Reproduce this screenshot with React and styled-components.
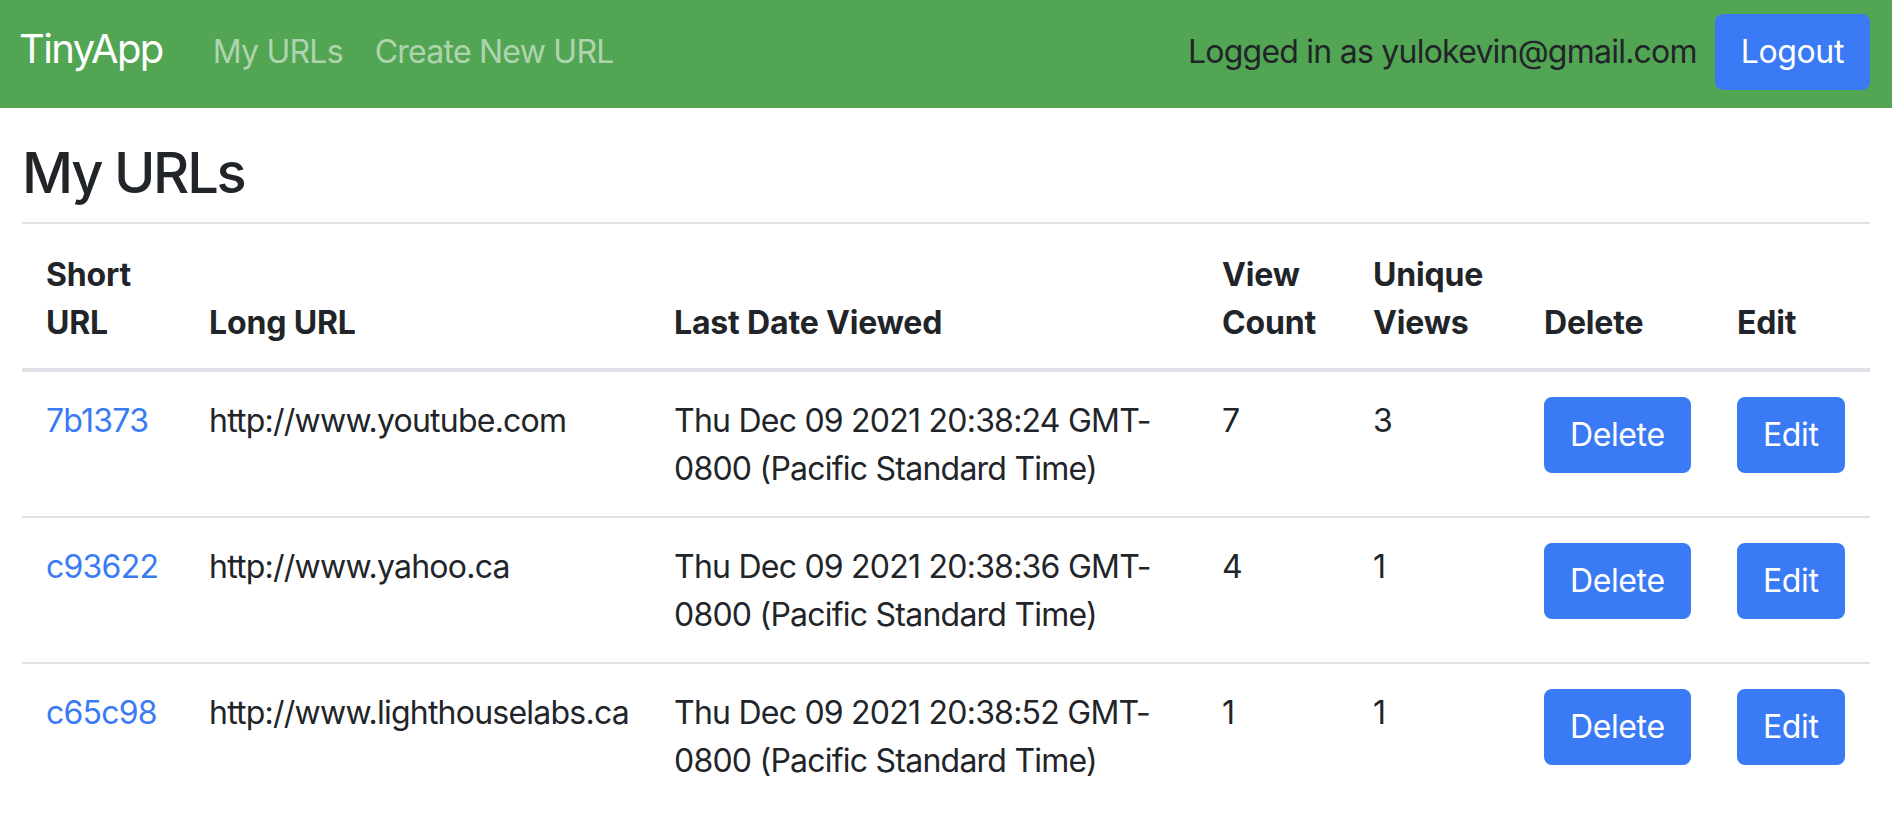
import React from "react";
import styled, { createGlobalStyle } from "styled-components";

const GlobalStyle = createGlobalStyle`
  html, body {
    margin: 0;
    padding: 0;
    background: #ffffff;
  }
  body {
    font-family: Inter, "Noto Sans", "Liberation Sans", sans-serif;
    color: #212529;
    font-size: 32px;
    line-height: 48px;
    letter-spacing: -0.024em;
  }
  * { box-sizing: border-box; }
`;

const Navbar = styled.nav`
  display: flex;
  align-items: center;
  justify-content: space-between;
  height: 108px;
  padding: 0 22px 4px 19px;
  background: #52a552;
`;

const NavLeft = styled.div`
  display: flex;
  align-items: baseline;
`;

const Brand = styled.a`
  font-size: 40px;
  line-height: 40px;
  letter-spacing: -0.04em;
  color: #ffffff;
  text-decoration: none;
  margin-right: 34px;
`;

const NavLink = styled.a`
  font-size: 32px;
  line-height: 48px;
  padding: 0 16px;
  color: rgba(255, 255, 255, 0.55);
  text-decoration: none;
`;

const NavRight = styled.div`
  display: flex;
  align-items: center;
  gap: 18px;
`;

const UserText = styled.span`
  font-size: 32px;
  line-height: 48px;
  color: #212529;
`;

const Button = styled.button`
  display: inline-block;
  font-family: inherit;
  font-size: 32px;
  line-height: 48px;
  letter-spacing: -0.012em;
  padding: 12px 24px;
  color: #ffffff;
  background: #3a7bf5;
  border: 2px solid #3a7bf5;
  border-radius: 8px;
  cursor: pointer;
  vertical-align: top;
`;

const Main = styled.main`
  padding: 0 22px;
`;

const Title = styled.h1`
  font-size: 56px;
  font-weight: 500;
  line-height: 70px;
  letter-spacing: -0.04em;
  margin: 30px 0 14px;
`;

const Table = styled.table`
  width: 100%;
  border-collapse: collapse;
  table-layout: fixed;
`;

const Th = styled.th`
  text-align: left;
  vertical-align: bottom;
  padding: 27px 24px 21px;
  font-weight: 700;
  letter-spacing: -0.005em;
  border-top: 2px solid #dee2e6;
  border-bottom: 4px solid #dee2e6;
`;

const Td = styled.td`
  text-align: left;
  vertical-align: top;
  padding: 25px 24px 23px;
  border-top: 2px solid #dee2e6;
`;

const ShortLink = styled.a`
  color: #3a7bf5;
  text-decoration: none;
`;

const columns = [163, 465, 548, 151, 171, 193, 157];

const rows = [
  { id: "7b1373", url: "http://www.youtube.com", date: "Thu Dec 09 2021 20:38:24 GMT-0800 (Pacific Standard Time)", views: 7, unique: 3 },
  { id: "c93622", url: "http://www.yahoo.ca", date: "Thu Dec 09 2021 20:38:36 GMT-0800 (Pacific Standard Time)", views: 4, unique: 1 },
  { id: "c65c98", url: "http://www.lighthouselabs.ca", date: "Thu Dec 09 2021 20:38:52 GMT-0800 (Pacific Standard Time)", views: 1, unique: 1 },
];

export default function App() {
  return (
    <>
      <GlobalStyle />
      <Navbar>
        <NavLeft>
          <Brand href="#">TinyApp</Brand>
          <NavLink href="#">My URLs</NavLink>
          <NavLink href="#">Create New URL</NavLink>
        </NavLeft>
        <NavRight>
          <UserText>Logged in as yulokevin@gmail.com</UserText>
          <Button>Logout</Button>
        </NavRight>
      </Navbar>
      <Main>
        <Title>My URLs</Title>
        <Table>
          <colgroup>
            {columns.map((w, i) => (
              <col key={i} style={{ width: w }} />
            ))}
          </colgroup>
          <thead>
            <tr>
              <Th>Short URL</Th>
              <Th>Long URL</Th>
              <Th>Last Date Viewed</Th>
              <Th>View Count</Th>
              <Th>Unique Views</Th>
              <Th>Delete</Th>
              <Th>Edit</Th>
            </tr>
          </thead>
          <tbody>
            {rows.map((r) => (
              <tr key={r.id}>
                <Td><ShortLink href="#">{r.id}</ShortLink></Td>
                <Td>{r.url}</Td>
                <Td>{r.date}</Td>
                <Td>{r.views}</Td>
                <Td>{r.unique}</Td>
                <Td><Button>Delete</Button></Td>
                <Td><Button>Edit</Button></Td>
              </tr>
            ))}
          </tbody>
        </Table>
      </Main>
    </>
  );
}
